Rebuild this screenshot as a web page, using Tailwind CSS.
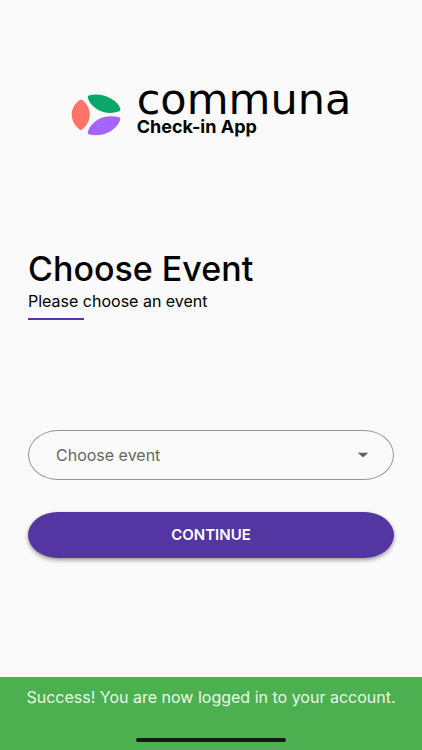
<!DOCTYPE html>
<html lang="en">
<head>
    <meta charset="UTF-8">
    <meta name="viewport" content="width=device-width, initial-scale=1.0">
    <title>Communa Check-in App</title>
    <script src="https://cdn.jsdelivr.net/npm/@tailwindcss/browser@4"></script>
</head>
<body class="bg-[#fafafa] text-black font-['Inter',sans-serif]">
    <div class="min-h-screen flex flex-col">
        <main class="flex-1 px-7 pt-[87px]">
            <!-- Logo -->
            <div class="flex justify-center gap-4">
                <svg class="w-[50px] h-[42px] mt-[7px] shrink-0" viewBox="0 0 50 42" aria-hidden="true">
                    <path fill="#ff7466" d="M8 6.5Q10 5 12 6.5C16 10 18.800 15 18.800 20.500S16 31.500 12 35Q10 37 8 35C3.500 31.500 0.700 26 0.700 20.500S3.500 10 8 6.500Z"/>
                    <path fill="#0aa76a" d="M16.800 3.500Q16.500 1.800 18.500 1.300C25 -0.300 33 0.500 40 4.500C45 7.500 48.500 11 49.300 15Q49.700 17 47.500 17.500C41 19.800 33 19.500 26.500 15.500C21 12 17.800 8 16.800 3.500Z"/>
                    <path fill="#a564ff" d="M49.300 25.500Q49.500 23.500 47.500 23C41 21.500 33 22 27 25.500C21.500 29 18 33 16.800 38Q16.500 40 18.500 40.500C25 42 33.500 41 40 37C45 33.500 48.300 29.500 49.300 25.500Z"/>
                </svg>
                <div>
                    <div class="font-['DejaVu_Sans',sans-serif] text-[43px] leading-6">communa</div>
                    <div class="mt-[6px] text-lg leading-5 font-bold">Check-in App</div>
                </div>
            </div>

            <h1 class="mt-28 text-[34px] leading-10 font-medium">Choose Event</h1>
            <p class="text-base leading-6">Please choose an event</p>
            <div class="mt-[5px] w-14 h-[2px] bg-[#5436a3]"></div>

            <form>
                <div class="relative mt-[110px]">
                    <select id="event" aria-label="Event" class="block appearance-none w-full py-3 pl-[27px] pr-12 border border-[#949494] rounded-[30px/25px] text-base leading-6 text-[#666666]">
                        <option>Choose event</option>
                    </select>
                    <svg class="absolute right-[25px] top-1/2 -translate-y-1/2 w-3 h-[5px] pointer-events-none" viewBox="0 0 12 5" aria-hidden="true">
                        <path fill="#616161" d="M0.500 0H11.500L6 5Z"/>
                    </svg>
                </div>
                <button type="button" class="mt-8 w-full py-[13px] rounded-[30px/23px] bg-[#5436a3] text-white text-[15px] leading-5 font-semibold shadow-[0_2px_4px_rgba(0,0,0,0.4)]">CONTINUE</button>
            </form>
        </main>

        <div role="status" class="bg-[#4caf50] pt-[10px] pb-2 px-2 text-center">
            <p class="text-base leading-5 text-[#e8f8e8]">Success! You are now logged in to your account.</p>
            <div class="mt-[31px] mx-auto w-[150px] h-1 rounded-full bg-[#171b17]"></div>
        </div>
    </div>
</body>
</html>
